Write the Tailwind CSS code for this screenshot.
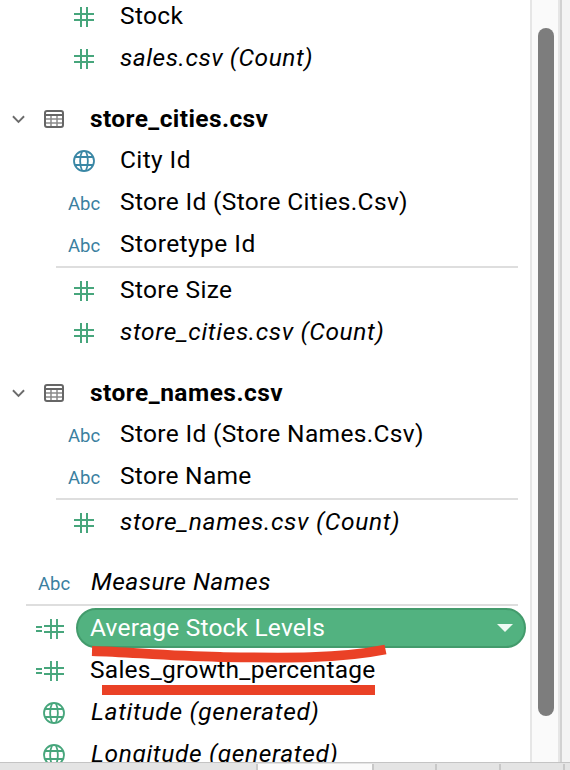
<!DOCTYPE html>
<html lang="en">
<head>
<meta charset="utf-8">
<title>Data pane</title>
<script src="https://cdn.jsdelivr.net/npm/@tailwindcss/browser@4"></script>
</head>
<body class="relative h-[770px] w-[570px] overflow-hidden bg-white font-[Roboto,'Liberation_Sans',sans-serif] text-[24.5px] leading-[42px] font-normal whitespace-nowrap text-black">
<svg class="hidden">
  <symbol id="hash" viewBox="0 0 20 20"><path d="M7 0V20M13 0V20M0 7H20M0 13H20" fill="none" stroke="currentColor" stroke-width="2"/></symbol>
  <symbol id="calc" viewBox="0 0 28 20"><path d="M15 0V20M21 0V20M8 7H28M8 13H28M0 8H6M0 12H6" fill="none" stroke="currentColor" stroke-width="1.9"/></symbol>
  <symbol id="globe" viewBox="0 0 22 22"><g fill="none" stroke="currentColor" stroke-width="1.8"><circle cx="11" cy="11" r="10"/><path d="M2 7H20M2 15H20M9 1.5C6.500 7 6.500 15 9 20.500M13 1.500C15.500 7 15.500 15 13 20.500"/></g></symbol>
  <symbol id="table" viewBox="0 0 20 18"><path d="M7 6V17M13 6V17M2 9H18M2 13H18" fill="none" stroke="#8a8a8a" stroke-width="1.5"/><path d="M1 5H19" stroke="#666" stroke-width="2"/><rect x="1" y="1" width="18" height="16" rx="2" fill="none" stroke="#666" stroke-width="2"/></symbol>
  <symbol id="chev" viewBox="0 0 14 9"><path d="M1 1L7 7L13 1" fill="none" stroke="#6b6b6b" stroke-width="2"/></symbol>
</svg>
<div class="flex h-[762px] overflow-hidden">
  <main class="w-[530px] shrink-0">
    <div class="-mt-[5px] flex h-[42px] items-center"><div class="flex w-[120px] shrink-0 justify-center pt-[2px] pl-[48px] text-[#47a67c]"><svg class="h-5 w-5"><use href="#hash"/></svg></div><span class="tracking-[0.35px]">Stock</span></div>
    <div class="flex h-[42px] items-center"><div class="flex w-[120px] shrink-0 justify-center pt-[2px] pl-[48px] text-[#47a67c]"><svg class="h-5 w-5"><use href="#hash"/></svg></div><span class="tracking-[0.55px] italic">sales.csv (Count)</span></div>

    <div class="mt-[19px] flex h-[41px] items-center"><svg class="mt-[2px] ml-[12px] h-[9px] w-[13px]"><use href="#chev"/></svg><svg class="ml-[19px] h-[18px] w-5"><use href="#table"/></svg><span class="ml-[26px] font-bold tracking-[0.4px]">store_cities.csv</span></div>
    <div class="flex h-[42px] items-center"><div class="flex w-[120px] shrink-0 justify-center pt-[2px] pl-[48px] text-[#3a87a5]"><svg class="h-[22px] w-[22px]"><use href="#globe"/></svg></div><span class="tracking-[0.4px]">City Id</span></div>
    <div class="flex h-[42px] items-center"><div class="w-[120px] shrink-0 pt-[3px] pl-[68px] text-[18.5px] text-[#3a80a0]">Abc</div><span class="tracking-[0.34px]">Store Id (Store Cities.Csv)</span></div>
    <div class="flex h-[42px] items-center"><div class="w-[120px] shrink-0 pt-[3px] pl-[68px] text-[18.5px] text-[#3a80a0]">Abc</div><span class="tracking-[0.45px]">Storetype Id</span></div>
    <div class="my-px ml-[56px] h-[2px] w-[462px] bg-[#dedede]"></div>
    <div class="flex h-[42px] items-center"><div class="flex w-[120px] shrink-0 justify-center pt-[2px] pl-[48px] text-[#47a67c]"><svg class="h-5 w-5"><use href="#hash"/></svg></div><span class="tracking-[0.35px]">Store Size</span></div>
    <div class="flex h-[42px] items-center"><div class="flex w-[120px] shrink-0 justify-center pt-[2px] pl-[48px] text-[#47a67c]"><svg class="h-5 w-5"><use href="#hash"/></svg></div><span class="tracking-[0.64px] italic">store_cities.csv (Count)</span></div>

    <div class="mt-[19px] flex h-[41px] items-center"><svg class="mt-[2px] ml-[12px] h-[9px] w-[13px]"><use href="#chev"/></svg><svg class="ml-[19px] h-[18px] w-5"><use href="#table"/></svg><span class="ml-[26px] font-bold tracking-[0.48px]">store_names.csv</span></div>
    <div class="flex h-[42px] items-center"><div class="w-[120px] shrink-0 pt-[3px] pl-[68px] text-[18.5px] text-[#3a80a0]">Abc</div><span class="tracking-[0.33px]">Store Id (Store Names.Csv)</span></div>
    <div class="flex h-[42px] items-center"><div class="w-[120px] shrink-0 pt-[3px] pl-[68px] text-[18.5px] text-[#3a80a0]">Abc</div><span class="tracking-[0.28px]">Store Name</span></div>
    <div class="my-px ml-[56px] h-[2px] w-[462px] bg-[#dedede]"></div>
    <div class="flex h-[42px] items-center"><div class="flex w-[120px] shrink-0 justify-center pt-[2px] pl-[48px] text-[#47a67c]"><svg class="h-5 w-5"><use href="#hash"/></svg></div><span class="tracking-[0.7px] italic">store_names.csv (Count)</span></div>

    <div class="mt-[18px] flex h-[42px] items-center"><div class="w-[91px] shrink-0 pt-[3px] pl-[38px] text-[18.5px] text-[#3a80a0]">Abc</div><span class="tracking-[0.48px] italic">Measure Names</span></div>
    <div class="my-px ml-[26px] h-[2px] w-[492px] bg-[#dedede]"></div>
    <div class="flex h-[42px] items-center"><svg class="mt-[2px] ml-[36px] h-5 w-7 text-[#47a67c]"><use href="#calc"/></svg>
      <div class="ml-[12px] flex h-[40px] w-[450px] items-center justify-between rounded-full border-2 border-[#439b6c] bg-[#52b280] pr-[11px] pl-[12px] text-white"><span class="tracking-[0.2px]">Average Stock Levels</span><svg class="h-[8px] w-4" viewBox="0 0 16 8"><path d="M0 0H16L8 8Z" fill="#effaf4"/></svg></div></div>
    <div class="flex h-[42px] items-center"><svg class="mt-[2px] ml-[36px] h-5 w-7 text-[#47a67c]"><use href="#calc"/></svg><span class="ml-[26px] tracking-[0.26px]">Sales_growth_percentage</span></div>
    <div class="flex h-[42px] items-center"><svg class="mt-[2px] ml-[43px] h-[22px] w-[22px] text-[#47a67c]"><use href="#globe"/></svg><span class="ml-[26px] tracking-[0.7px] italic">Latitude (generated)</span></div>
    <div class="flex h-[42px] items-center"><svg class="mt-[2px] ml-[43px] h-[22px] w-[22px] text-[#47a67c]"><use href="#globe"/></svg><span class="ml-[26px] tracking-[0.65px] italic">Longitude (generated)</span></div>
  </main>
  <div class="w-[30px] shrink-0 border-x-2 border-[#e6e6e6] bg-[#fafafa] pt-[28px] pl-[6px]"><div class="h-[688px] w-4 rounded-full bg-[#7d7d7d]"></div></div>
  <div class="w-[10px] border-l-2 border-[#d2d2d2] bg-[#f4f4f4]"></div>
</div>
<footer class="flex h-[8px] border-t border-[#c4c4c4] bg-[#e4e4e4] pt-px">
  <div class="w-[258px] border-r-2 border-[#c8c8c8]"></div><div class="w-[116px] border-r-2 border-[#c8c8c8] bg-[#fafafa]"></div><div class="w-[63px] border-r-2 border-[#c8c8c8]"></div><div class="w-[64px] border-r-2 border-[#c8c8c8]"></div><div class="w-[64px] border-r-2 border-[#c8c8c8]"></div>
</footer>
<svg class="absolute top-[640px] left-[85px] h-[60px] w-[310px]" viewBox="85 640 310 60"><path d="M92 651C130 652 165 656 220 657C285 658 338 659 385.500 649.500" fill="none" stroke="#ea4126" stroke-width="9.800"/><path d="M102 690H375" stroke="#ea4126" stroke-width="10"/></svg>
</body>
</html>
